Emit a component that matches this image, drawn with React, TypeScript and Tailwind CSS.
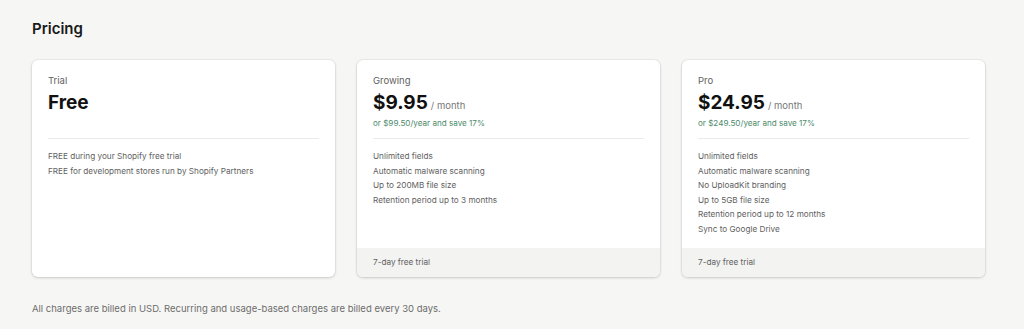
import React from "react";

interface Plan {
  name: string;
  price: string;
  per?: string;
  yearly?: string;
  features: string[];
  trial?: string;
}

const planes: Plan[] = [
  {
    name: "Trial",
    price: "Free",
    features: [
      "FREE during your Shopify free trial",
      "FREE for development stores run by Shopify Partners",
    ],
  },
  {
    name: "Growing",
    price: "$9.95",
    per: "/ month",
    yearly: "or $99.50/year and save 17%",
    features: [
      "Unlimited fields",
      "Automatic malware scanning",
      "Up to 200MB file size",
      "Retention period up to 3 months",
    ],
    trial: "7-day free trial",
  },
  {
    name: "Pro",
    price: "$24.95",
    per: "/ month",
    yearly: "or $249.50/year and save 17%",
    features: [
      "Unlimited fields",
      "Automatic malware scanning",
      "No UploadKit branding",
      "Up to 5GB file size",
      "Retention period up to 12 months",
      "Sync to Google Drive",
    ],
    trial: "7-day free trial",
  },
];

const PlanCard: React.FC<{ plan: Plan }> = ({ plan }) => (
  <div className="bg-white rounded-[6px] flex flex-col overflow-hidden shadow-[0_0_0_1px_rgba(63,63,68,0.05),0_1px_3px_0_rgba(63,63,68,0.2)]">
    {/* Cabecera */}
    <div className="px-4">
      <div className="h-[79px] pt-[14px] border-b border-[#ebebeb]">
        <div className="text-[9.5px] leading-[14px] text-[#616161]">{plan.name}</div>
        <div className="mt-[4px] flex items-baseline gap-[3px] leading-[22px]">
          <span className="text-[19px] font-bold text-[#111]">{plan.price}</span>
          {plan.per && <span className="text-[9.5px] text-[#777]">{plan.per}</span>}
        </div>
        {plan.yearly && (
          <div className="text-[8.1px] leading-[12px] text-[#4c8a6c]">{plan.yearly}</div>
        )}
      </div>
    </div>

    {/* Lista */}
    <ul className="px-4 pt-[10px] pb-[12px]">
      {plan.features.map((f) => (
        <li key={f} className="text-[8.2px] leading-[14.5px] text-[#616161]">
          {f}
        </li>
      ))}
    </ul>

    {/* Pie */}
    {plan.trial && (
      <div className="mt-auto h-[29px] px-4 flex items-center bg-[#f3f3f2] text-[8.2px] text-[#616161]">
        {plan.trial}
      </div>
    )}
  </div>
);

export default function App() {
  return (
    <div className="min-h-screen bg-[#f6f6f4] px-8 pt-[19px] font-['Inter',sans-serif]">
      <h1 className="text-[15px] leading-5 font-semibold text-[#1a1a1a]">Pricing</h1>
      <div className="mt-[21px] grid grid-cols-3 gap-[22px] w-[953px]">
        {planes.map((p) => (
          <PlanCard key={p.name} plan={p} />
        ))}
      </div>
      <p className="mt-[25px] text-[9.5px] leading-[14px] text-[#6d6d6d]">
        All charges are billed in USD. Recurring and usage-based charges are billed every 30 days.
      </p>
    </div>
  );
}
